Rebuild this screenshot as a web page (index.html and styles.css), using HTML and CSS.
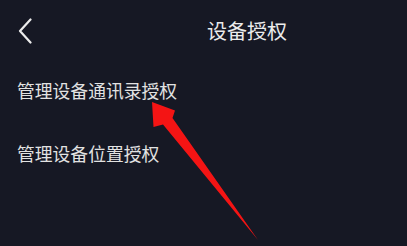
FILE: index.html
```html
<!DOCTYPE html>
<html lang="zh-CN">
<head>
	<meta charset="UTF-8">
	<title>设备授权</title>
	<link rel="stylesheet" href="styles.css">
</head>
<body>
	<div class="page">
		<div class="header">
			<a class="back" href="javascript:;">
				<svg width="14" height="26" viewBox="0 0 14 26">
					<polyline points="12.5,1.5 2,13 12.5,24.5" fill="none" stroke="#ececec" stroke-width="2.2" stroke-linecap="round" stroke-linejoin="round"/>
				</svg>
			</a>
			<div class="title">设备授权</div>
		</div>
		<ul class="menu">
			<li><a href="javascript:;">管理设备通讯录授权</a></li>
			<li><a href="javascript:;">管理设备位置授权</a></li>
		</ul>
		<!-- 标注箭头 -->
		<svg class="arrow" width="407" height="246" viewBox="0 0 407 246">
			<polygon points="152,102 175,110.5 172.5,118 258,240 163,124.5 153.5,127" fill="#f41414"/>
		</svg>
	</div>
</body>
</html>
```

FILE: styles.css
```css
*{
	margin:0;
	padding:0;
}
body{
	background:#161824;
	font-family:"Noto Sans CJK SC","Noto Sans",sans-serif;
}
.page{
	position:relative;
	width:407px;
	height:246px;
	overflow:hidden;
	background:#161824;
}
.header{
	display:flex;
	align-items:center;
	height:62px;
	padding-left:18px;
}
.back{
	display:block;
	width:14px;
	height:26px;
}
.back svg{
	display:block;
}
.title{
	margin-left:175px;
	font-size:20px;
	font-weight:400;
	color:#ececec;
	line-height:62px;
}
.menu{
	list-style:none;
	margin-top:-3px;
	padding-left:17px;
}
.menu li{
	height:63px;
	line-height:63px;
}
.menu a{
	font-size:17.8px;
	color:#e2e2e2;
	text-decoration:none;
}
.arrow{
	position:absolute;
	left:0;
	top:0;
}
```
